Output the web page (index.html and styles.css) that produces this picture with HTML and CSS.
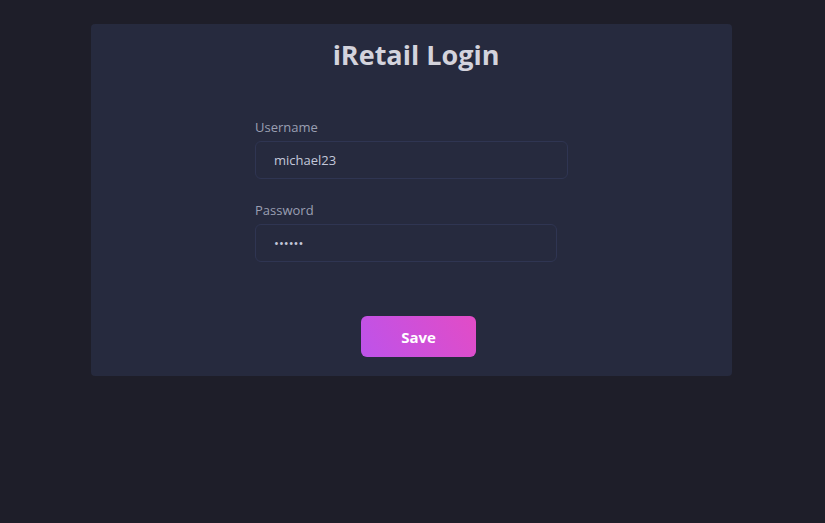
FILE: index.html
```html
<!DOCTYPE html>
<html lang="en">
<head>
<meta charset="utf-8">
<title>iRetail Login</title>
<link rel="stylesheet" href="styles.css">
</head>
<body>
<main class="page">
  <section class="card">
    <h1 class="title">iRetail Login</h1>
    <form class="form">
      <div class="field">
        <label class="label" for="username">Username</label>
        <input class="input input-user" id="username" type="text" value="michael23">
      </div>
      <div class="field">
        <label class="label" for="password">Password</label>
        <input class="input input-pass" id="password" type="password" value="secret">
      </div>
      <div class="actions">
        <button class="btn" type="button">Save</button>
      </div>
    </form>
  </section>
</main>
</body>
</html>
```
FILE: styles.css
```css
* { box-sizing: border-box; }
html, body { margin: 0; padding: 0; }
body {
  background: #1e1e29;
  font-family: "Open Sans", "DejaVu Sans", sans-serif;
  min-height: 523px;
}
.page {
  padding-top: 24px;
  display: flex;
  justify-content: center;
}
.card {
  width: 641px;
  margin-left: -2px;
  background: #262a3e;
  border-radius: 4px;
  padding: 12px 0 19px;
}
.title {
  margin: 0;
  text-align: center;
  font-size: 27px;
  font-weight: 700;
  color: #d3d3dc;
  line-height: 38px;
  padding-left: 9px;
}
.form {
  width: 313px;
  margin: 45px auto 0;
  display: flex;
  flex-direction: column;
}
.field {
  display: flex;
  flex-direction: column;
  gap: 6px;
  margin-bottom: 23px;
}
.label {
  font-size: 13px;
  line-height: 16px;
  color: #9a9fb2;
}
.input {
  height: 38px;
  background: #262a3e;
  border: 1px solid #2f3552;
  border-radius: 6px;
  padding: 0 18px;
  font-family: inherit;
  font-size: 13px;
  color: #c3c8da;
  outline: none;
}
.input-user { width: 313px; }
.input-pass { width: 302px; }
.actions {
  display: flex;
  justify-content: center;
  margin-top: 31px;
  padding-left: 14px;
}
.btn {
  width: 115px;
  height: 41px;
  border: none;
  border-radius: 6px;
  background: linear-gradient(60deg, #bd53ea 0%, #e24cc6 100%);
  color: #ffffff;
  font-family: inherit;
  font-size: 15px;
  font-weight: 700;
  cursor: pointer;
}
```
